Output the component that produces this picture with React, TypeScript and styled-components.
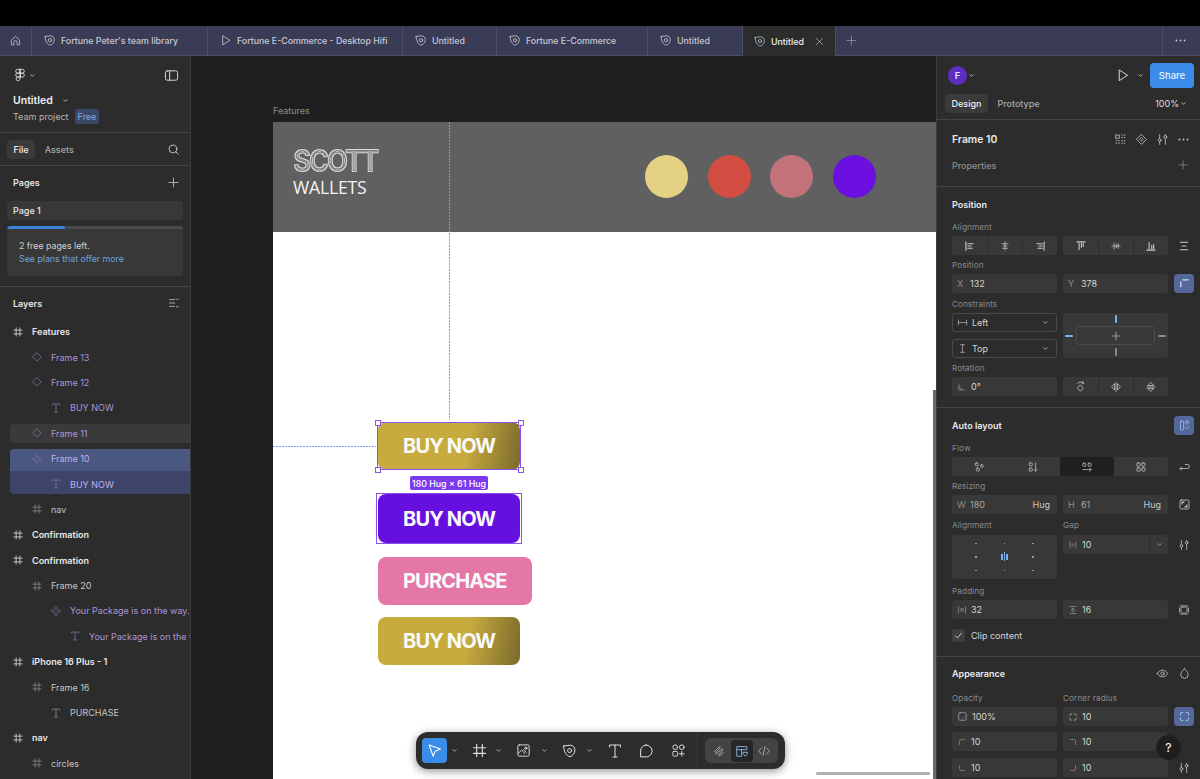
import React from "react";
import styled, { createGlobalStyle } from "styled-components";

const Global = createGlobalStyle`
  html, body { margin: 0; padding: 0; background: #000; }
  body { font-family: Inter, "Liberation Sans", sans-serif; overflow: hidden; }
  * { box-sizing: border-box; }
`;

const Shell = styled.div`
  width: 1200px; height: 779px; display: flex; flex-direction: column; overflow: hidden; background: #000;
`;
const TopBlack = styled.div`height: 26px; background: #000; flex: none;`;

/* ---------- icons ---------- */
const Svg = styled.svg<{ $c?: string }>`
  flex: none; display: block; fill: none; stroke: currentColor; stroke-width: 1;
  color: ${p => p.$c || "#c8c8c8"}; stroke-linecap: round; stroke-linejoin: round;
`;
const paths: Record<string, React.ReactNode> = {
  home: <path d="M3 7.5 8 3l5 4.5V13a.5.5 0 0 1-.5.5H10V10a2 2 0 0 0-4 0v3.5H3.5A.5.5 0 0 1 3 13Z" />,
  leaf: <><path d="M2.6 3 9.3 2.2c2.8 0 4.6 2.2 4.6 4.8 0 3.1-2.2 6-4.9 6.6C5.6 13.8 2.6 8 2.6 3Z" /><circle cx="8.6" cy="7.6" r="2" /></>,
  play: <path d="M4.5 2.5v11l8.5-5.5Z" />,
  x: <path d="M3.5 3.5l9 9M12.5 3.5l-9 9" />,
  plus: <path d="M8 2.5v11M2.5 8h11" />,
  chev: <path d="M5 6.5 8 9.5l3-3" strokeWidth="1.4" />,
  panel: <><rect x="1.5" y="3" width="13" height="10" rx="2" /><path d="M6 3v10" /></>,
  search: <><circle cx="7.3" cy="7.3" r="4.8" /><path d="m10.8 10.8 3 3" /></>,
  figma: <><path d="M8 1.5H5.3a2.2 2.2 0 0 0 0 4.4H8ZM8 1.5h2.7a2.2 2.2 0 0 1 0 4.4H8ZM8 5.9H5.3a2.2 2.2 0 0 0 0 4.4H8ZM8 8.1a2.2 2.2 0 1 1 4.9 0 2.2 2.2 0 0 1-4.9 0ZM8 10.3H5.3a2.2 2.2 0 1 0 2.7 2.2Z" /></>,
  collapse: <path d="M2 3.5h7M2 8h7M2 12.5h7M11 2.5l1.5 1.5L14 2.5M11 13.5l1.5-1.5 1.5 1.5" />,
  hash: <path d="M5.5 2.5v11M10.5 2.5v11M2.5 5.5h11M2.5 10.5h11" />,
  diamond: <path d="M8 2.5 13.5 8 8 13.5 2.5 8Z" />,
  instance: <path d="m8 1.8 2 2-2 2-2-2ZM8 10.2l2 2-2 2-2-2ZM3.8 6l2 2-2 2-2-2ZM12.2 6l2 2-2 2-2-2Z" />,
  text: <path d="M3 4V2.8h10V4M8 2.8v10.4M6 13.2h4" />,
  grid: <path d="M2.5 2.5h4v4h-4ZM9.5 2.5h1M12.5 2.5h1M9.5 5.5h1M12.5 5.5h1M2.5 9.5h1M5.5 9.5h1M9.5 9.5h1M12.5 9.5h1M2.5 12.5h1M5.5 12.5h1M9.5 12.5h1M12.5 12.5h1" />,
  comp: <><path d="M8 2 14 8 8 14 2 8Z" /><path d="M8 6 10 8 8 10 6 8Z" /></>,
  sliders: <><path d="M4.5 2v5M4.5 11v3M11.5 2v1M11.5 7v7" /><circle cx="4.5" cy="9" r="1.8" /><circle cx="11.5" cy="5" r="1.8" /></>,
  dots: <g fill="currentColor" stroke="none"><circle cx="3" cy="8" r="1.1" /><circle cx="8" cy="8" r="1.1" /><circle cx="13" cy="8" r="1.1" /></g>,
  alL: <path d="M2.5 2.5v11M5 5h7M5 8h4.5M5 11h6" strokeWidth="1.5" />,
  alC: <path d="M8 2.5v11M4 5h8M5.5 8h5M4.5 11h7" />,
  alR: <path d="M13.5 2.5v11M4 5h7M6.5 8H11M5 11h6" strokeWidth="1.5" />,
  alT: <path d="M2.5 2.5h11M5.5 4.5v8M8.5 4.5v5M11 4.5v4" strokeWidth="1.5" />,
  alM: <path d="M2.5 8h11M5.5 4v8M8.5 5.5v5M11 5v6" />,
  alB: <path d="M2.5 13.5h11M5.5 3.5v8M9 7v4.5M11.5 6v5.5" strokeWidth="1.5" />,
  dist: <path d="M3 3h10M3 13h10M5.5 8h5" strokeWidth="1.5" />,
  cnr: <path d="M3.5 12V6M6 3.5h6.5" strokeWidth="1.6" />,
  hLine: <path d="M2 4.5v7M14 4.5v7M2 8h12" />,
  vLine: <path d="M5 2.5h6M5 13.5h6M8 2.5v11" />,
  rot: <path d="M3 3.5v9h9M3 8.5a4 4 0 0 1 4 4" />,
  rot90: <><path d="M4.5 4A5 5 0 0 1 12 4M10.5 2 12 4l-2 .8" /><path d="m8 6.5 3.5 3.5L8 13.8 4.5 10Z" /></>,
  flipH: <path d="M8 2v12M6 4v8L2.5 8ZM10 4v8l3.5-4Z" />,
  flipV: <path d="M2.5 8h11M4 6h8L8 2.5ZM4 10h8l-4 3.5Z" />,
  auto: <><rect x="3" y="2.5" width="4" height="11" rx="1" /><rect x="9.5" y="2.5" width="3.5" height="3.5" rx="1" /><path d="m9.5 10.5 1.5 1.5 2.5-3" /></>,
  flowFree: <><rect x="3" y="2.5" width="4" height="4" rx="1.5" /><rect x="10" y="5" width="3.5" height="3.5" rx="1.5" /><rect x="4.5" y="9.5" width="4" height="4" rx="1.5" /></>,
  flowV: <><rect x="3" y="2.5" width="4" height="4" rx="1" /><rect x="3" y="9.5" width="4" height="4" rx="1" /><path d="M11.5 2.5v11M9.5 11.5l2 2 2-2" /></>,
  flowH: <><rect x="2.5" y="3" width="4" height="4" rx="1" /><rect x="9.5" y="3" width="4" height="4" rx="1" /><path d="M2.5 11.5h11M11.5 9.5l2 2-2 2" /></>,
  flowG: <><rect x="2.5" y="2.5" width="4.5" height="4.5" rx="1.5" /><rect x="9" y="2.5" width="4.5" height="4.5" rx="1.5" /><rect x="2.5" y="9" width="4.5" height="4.5" rx="1.5" /><rect x="9" y="9" width="4.5" height="4.5" rx="1.5" /></>,
  wrap: <path d="M2.5 10.5h9a2.5 2.5 0 0 0 0-5H9M4.5 8.5l-2 2 2 2" />,
  resize: <><rect x="2.5" y="2.5" width="11" height="11" rx="1.5" /><path d="M5 5h2.5M11 11H8.5M5 5v2.5M11 11V8.5" strokeWidth="1.4" /></>,
  gap: <path d="M3 3v10M13 3v10M6.5 6v4M9.5 6v4" />,
  padH: <><path d="M2.5 3v10M13.5 3v10" /><rect x="6" y="6" width="4" height="4" rx="1" /></>,
  padV: <><path d="M3 2.5h10M3 13.5h10" /><rect x="6" y="6" width="4" height="4" rx="1" /></>,
  padAll: <><rect x="4" y="4" width="8" height="8" rx="2" /><path d="M3 2.5h10M3 13.5h10M2 5v6M14 5v6" /></>,
  check: <path d="m3.5 8.5 3 3 6-7" strokeWidth="1.2" />,
  eye: <><path d="M1.5 8S4 3.8 8 3.8 14.5 8 14.5 8 12 12.2 8 12.2 1.5 8 1.5 8Z" /><circle cx="8" cy="8" r="2" /></>,
  drop: <path d="M8 2s4.5 4.2 4.5 7.5a4.5 4.5 0 0 1-9 0C3.5 6.2 8 2 8 2Z" />,
  opacity: <><rect x="2.5" y="2.5" width="11" height="11" rx="2" /><path d="M5 13 13 5" strokeOpacity=".35" /><path d="M8 13l5-5" strokeOpacity=".35" /></>,
  corners: <path d="M3 6V5a2 2 0 0 1 2-2h1M10 3h1a2 2 0 0 1 2 2v1M13 10v1a2 2 0 0 1-2 2h-1M6 13H5a2 2 0 0 1-2-2v-1" strokeWidth="1.3" />,
  cTL: <path d="M4 12V7a3 3 0 0 1 3-3h5" />,
  cTR: <path d="M4 4h5a3 3 0 0 1 3 3v5" />,
  cBL: <path d="M4 4v5a3 3 0 0 0 3 3h5" />,
  cBR: <path d="M4 12h5a3 3 0 0 0 3-3V4" />,
  move: <path d="m3 2.8 10.5 3.8-4.8 2-2 4.8Z" />,
  frame: <path d="M5 1.5v13M11 1.5v13M1.5 5h13M1.5 11h13" strokeWidth="1.2" />,
  image: <><rect x="2" y="2" width="12" height="12" rx="1.5" /><circle cx="10.5" cy="5.5" r="1.2" /><path d="m2.5 11 3.5-3.5 3.5 4M8 7l3 3" /></>,
  tee: <path d="M2.5 4V2h11v2M8 2v12M6 14h4" />,
  bubble: <path d="M8 2a6 6 0 1 1-1 11.9H2.6V8A5.9 5.9 0 0 1 8 2Z" />,
  widgets: <><circle cx="4.5" cy="4.5" r="2.5" /><circle cx="11.5" cy="4.5" r="2.5" /><rect x="2" y="9" width="5" height="5" rx="1" /><path d="M11.5 9v5M9 11.5h5" /></>,
  draw: <path d="M2.5 9 8 3.5c1-1 2 0 1 1L4.5 10c-1 1 0 2 1 1L11 6c1-1 2 0 1 1L8 12c-1 1 0 2 1 1l4-3" />,
  design: <><path d="M2.5 3h11v3.5h-6V14h-5ZM2.5 6.5h5" /><path d="m9.5 9.5h4.5v2L11.7 14l-2.2-2.5Z" /></>,
  code: <path d="M5 4.5 2 8l3 3.5M11 4.5 14 8l-3 3.5M9 3 7 13" />,
};
const Ic = ({ n, s = 14, c }: { n: string; s?: number; c?: string }) => (
  <Svg width={s} height={s} viewBox="0 0 16 16" $c={c}>{paths[n]}</Svg>
);

/* ---------- tabs ---------- */
const TabBar = styled.div`
  height: 30px; flex: none; display: flex; align-items: stretch; background: #3a3c56;
  border-bottom: 1px solid #4c4e66;
`;
const Tab = styled.div<{ $w: number; $active?: boolean }>`
  width: ${p => p.$w}px; display: flex; align-items: center; gap: 5px; padding-left: ${p => p.$active ? 10 : 11}px;
  border-right: 1px solid #4c4e66; font-size: 8.8px; font-weight: 500; white-space: nowrap;
  color: ${p => p.$active ? "#f0f0f0" : "#c6c8d4"};
  background: ${p => p.$active ? "#2c2c2c" : "transparent"};
  margin-bottom: ${p => p.$active ? "-1px" : "0"};
`;
const HomeTab = styled.div`
  width: 32px; display: flex; align-items: center; justify-content: center; border-right: 1px solid #4c4e66;
`;
const TabClose = styled.span`margin-left: 5px; display: flex;`;
const TabPlus = styled.div`margin-left: 9px; display: flex; align-items: center;`;
const TabMenu = styled.div`margin-left: auto; width: 38px; display: flex; align-items: center; border-left: 1px solid #4c4e66; padding-left: 11px;`;

/* ---------- main ---------- */
const Main = styled.div`flex: 1; display: flex; min-height: 0;`;
const Left = styled.aside`
  width: 191px; flex: none; background: #2c2c2c; border-right: 1px solid #3d3d3d; display: flex; flex-direction: column; overflow: hidden;
`;
const LeftHead = styled.div`height: 77px; flex: none; padding: 11px 12px 0 13px; border-bottom: 1px solid #444;`;
const LogoRow = styled.div`display: flex; align-items: center; height: 16px; gap: 1px; margin-bottom: 10px;`;
const PanelBtn = styled.div`margin-left: auto; margin-right: -1px;`;
const FileName = styled.div`display: flex; align-items: center; gap: 8px; font-size: 10.5px; font-weight: 600; color: #eee; height: 14px;`;
const TeamRow = styled.div`display: flex; align-items: center; gap: 6px; margin-top: 2px; font-size: 9px; color: #b4b4b4;`;
const Badge = styled.span`background: #3a4a66; color: #7ea6e0; padding: 2px 3px; border-radius: 3px; font-size: 9px;`;
const FileTabs = styled.div`height: 33px; flex: none; display: flex; align-items: center; gap: 3px; padding: 0 10px 0 7px; border-bottom: 1px solid #444;`;
const PillTab = styled.div`
  height: 19px; padding: 0 6.5px; display: flex; align-items: center; border-radius: 4px;
  font-size: 9px; font-weight: 500; color: #a8a8a8;
`;
const PillTabOn = styled(PillTab)`color: #eee; background: #3a3a3a;`;
const Spacer = styled.div`margin-left: auto;`;
const PagesSec = styled.div`height: 121px; flex: none; padding: 0 7px; border-bottom: 1px solid #444;`;
const SecHead = styled.div`height: 35px; display: flex; align-items: center; padding: 0 3px 2px 6px; font-size: 9px; font-weight: 600; color: #e6e6e6;`;
const PageRow = styled.div`height: 19px; background: #383838; border-radius: 4px; padding-left: 6px; display: flex; align-items: center; font-size: 9px; font-weight: 500; color: #ececec;`;
const Upsell = styled.div`margin-top: 6px; height: 50px; background: #383838; border-radius: 4px; overflow: hidden; font-size: 8.8px; line-height: 12.8px; color: #d0d0d0;`;
const Meter = styled.div`height: 3px; background: #4a4a4a; margin-bottom: 11px;`;
const MeterFill = styled.div`height: 100%; background: #3b82d8; border-radius: 2px;`;
const UpsellText = styled.div`padding-left: 12px;`;
const UpsellLink = styled.div`color: #6fa3d8;`;
const LayersHead = styled(SecHead)`padding: 0 10px 0 13px; height: 32px; flex: none;`;
const LayerList = styled.div`flex: 1;`;
const Row = styled.div<{ $d: number; $st?: string; $top?: boolean; $inst?: boolean }>`
  position: relative; height: 25.4px; display: flex; align-items: center; gap: 8px;
  padding-left: ${p => 12 + p.$d * 19}px; font-size: 9px; white-space: nowrap; overflow: hidden;
  font-weight: ${p => p.$top ? 600 : 400};
  color: ${p => p.$top ? "#e8e8e8" : p.$inst ? "#ab95d6" : "#c4c4c4"};
  &::before {
    content: ""; position: absolute; left: 10px; right: 0; display: ${p => p.$st ? "block" : "none"};
    top: ${p => p.$st === "child" ? 0 : 3}px; bottom: ${p => p.$st === "sel" ? 0 : 3}px;
    background: ${p => p.$st === "hover" ? "#3a3a3a" : p.$st === "sel" ? "#4a5780" : "#3e4568"};
    border-radius: ${p => p.$st === "sel" ? "4px 0 0 0" : p.$st === "child" ? "0 0 0 4px" : "4px 0 0 4px"};
  }
  & > * { position: relative; }
`;
const RowLabel = styled.span<{ $sel?: boolean }>`color: ${p => p.$sel ? "#bfb0ee" : "inherit"};`;

/* ---------- canvas ---------- */
const Canvas = styled.div`flex: 1; min-width: 0; position: relative; background: #1e1e1e; overflow: hidden; padding: 49px 0 0 82px;`;
const FrameName = styled.div`height: 17px; font-size: 9px; color: #8c8c8c; line-height: 12px;`;
const Frame = styled.div`width: 663px; background: #fff; height: 660px; position: relative;`;
const Nav = styled.div`height: 110px; background: #606060; display: flex; align-items: center; padding-left: 20px;`;
const Brand = styled.div`width: 92px; display: flex; flex-direction: column; margin-top: -8px;`;
const LogoSvg = styled.svg`display: block; margin-top: -8px;`;
const Wallets = styled.div`font-family: "Open Sans", sans-serif; font-size: 17.6px; line-height: 22px; color: #f4f4f4; letter-spacing: -.2px;`;
const Circles = styled.div`display: flex; gap: 19.5px; margin-left: 260px; margin-top: -1px;`;
const Dot = styled.div<{ $c: string }>`width: 43px; height: 43px; border-radius: 50%; background: ${p => p.$c};`;
const Buttons = styled.div`display: flex; flex-direction: column; align-items: flex-start; padding: 190px 0 0 105px;`;
const Btn = styled.div<{ $bg: string; $mt: number; $h?: number }>`
  height: ${p => p.$h || 48}px; margin-top: ${p => p.$mt}px; padding: 0 25px; border-radius: 8px; background: ${p => p.$bg};
  display: flex; align-items: center; color: #fafafa; font-size: 20px; font-weight: 700; letter-spacing: -.85px; position: relative;
`;
const gold = "linear-gradient(100deg, #c7ab3f 0%, #c7ab3f 62%, #7a6a2c 100%)";
const SelBox = styled.div<{ $t: number; $h: number; $l: number; $w: number }>`
  position: absolute; top: ${p => p.$t}px; left: ${p => p.$l}px; width: ${p => p.$w}px; height: ${p => p.$h}px;
  border: 1px solid #8a52ec;
`;
const Handle = styled.div<{ $x: string; $y: string }>`
  position: absolute; width: 6px; height: 6px; background: #fff; border: 1px solid #8a52ec;
  ${p => p.$x}: -3.5px; ${p => p.$y}: -3.5px;
`;
const SizeTag = styled.div`
  position: absolute; left: 137px; top: 354px; height: 14px; width: 78px; background: #7c3aed; color: #fff; border-radius: 2px;
  font-size: 8.8px; font-weight: 500; display: flex; align-items: center; justify-content: center; white-space: nowrap;
`;
const GuideV = styled.div`
  position: absolute; left: 176px; top: 0; height: 298px; width: 1px;
  background: repeating-linear-gradient(180deg, #6aa0ee 0 2px, transparent 2px 3px);
`;
const GuideH = styled.div`
  position: absolute; left: 0; top: 324px; width: 103px; height: 1px;
  background: repeating-linear-gradient(90deg, #6aa0ee 0 2px, transparent 2px 3px);
`;
const ScrollH = styled.div`position: absolute; left: 625px; top: 716px; width: 114px; height: 3px; border-radius: 2px; background: #b0b0b0;`;
const ScrollV = styled.div`position: absolute; right: 0; top: 334px; bottom: 0; width: 3px; background: #6a6a6a;`;

const Toolbar = styled.div`
  position: absolute; left: 225px; top: 676px; width: 369px; height: 37px; border-radius: 12px; background: #2c2c2c;
  box-shadow: 0 2px 8px rgba(0,0,0,.45); display: flex; align-items: center; padding-left: 6px;
`;
const MoveBtn = styled.div`width: 25px; height: 25px; background: #3b8be8; border-radius: 4px; display: flex; align-items: center; justify-content: center; color: #fff;`;
const Tool = styled.div<{ $ml: number }>`margin-left: ${p => p.$ml}px; display: flex; align-items: center;`;
const ModeWrap = styled.div`margin-left: auto; height: 37px; border-left: 1px solid #3a3a3a; padding: 0 7px; display: flex; align-items: center;`;
const Modes = styled.div`height: 25px; width: 73px; background: #434343; border-radius: 6px; display: flex; align-items: center; justify-content: space-between; padding: 0 3px;`;
const Mode = styled.div<{ $on?: boolean }>`width: 22px; height: 22px; border-radius: 4px; display: flex; align-items: center; justify-content: center; background: ${p => p.$on ? "#262626" : "transparent"};`;

/* ---------- right ---------- */
const Right = styled.aside`width: 264px; flex: none; background: #2c2c2c; border-left: 1px solid #3d3d3d; overflow: hidden; position: relative;`;
const RHead = styled.div`height: 64px; border-bottom: 1px solid #444; padding: 0 6px 0 8px;`;
const RTop = styled.div`height: 38px; display: flex; align-items: center;`;
const Avatar = styled.div`width: 19px; height: 19px; border-radius: 50%; background: #5a2fc2; color: #e8e0ff; font-size: 9.5px; font-weight: 600; display: flex; align-items: center; justify-content: center; margin-left: 3px;`;
const ShareBtn = styled.div`width: 44px; height: 25px; border-radius: 4px; background: #3b8be8; color: #e8f2ff; font-size: 9.5px; font-weight: 500; display: flex; align-items: center; justify-content: center;`;
const PlayGroup = styled.div`margin-left: auto; display: flex; align-items: center; margin-right: 5px; gap: 6px;`;
const RTabs = styled.div`height: 19px; display: flex; align-items: center; gap: 3px;`;
const Zoom = styled.div`margin-left: auto; margin-right: 6px; display: flex; align-items: center; font-size: 9px; color: #ddd;`;
const Sec = styled.section<{ $h: number; $pt?: number }>`height: ${p => p.$h}px; border-bottom: 1px solid #444; padding: ${p => p.$pt ?? 10}px 6px 0 15px;`;
const LastSec = styled(Sec)`border-bottom: none;`;
const TitleRow = styled.div`height: 14px; display: flex; align-items: center; font-size: 9px; font-weight: 600; color: #eaeaea;`;
const FrameTitle = styled(TitleRow)`font-size: 10.4px; font-weight: 600; height: 19px;`;
const TitleIcons = styled.div<{ $g?: number; $mr?: number }>`margin-left: auto; display: flex; align-items: center; gap: ${p => p.$g || 9}px; margin-right: ${p => p.$mr || 0}px;`;
const PropRow = styled.div`height: 14px; margin-top: 9px; display: flex; align-items: center; justify-content: space-between; font-size: 9px; font-weight: 500; color: #8e8e8e; padding-right: 5px;`;
const Lbl = styled.div<{ $mt?: number; $mb?: number }>`height: 12px; margin: ${p => p.$mt ?? 4}px 0 ${p => p.$mb ?? 3}px; font-size: 8.2px; color: #8a8a8a; line-height: 12px; letter-spacing: .1px;`;
const G = styled.div`display: grid; grid-template-columns: 105px 105px 20px; column-gap: 6px;`;
const LblPair = styled(G)<{ $mt?: number }>`margin-top: ${p => p.$mt || 0}px;`;
const Field = styled.div`
  height: 19px; border-radius: 3px; background: #383838;
  padding: 0 5px; display: flex; align-items: center; gap: 4px; font-size: 9px; color: #d6d6d6; position: relative; align-self: start;
`;
const SelectField = styled(Field)`background: transparent; border: 1px solid #4a4a4a; padding: 0 4px; align-self: stretch;`;
const Axis = styled.span`color: #8c8c8c; width: 9px; text-align: left;`;
const Dim = styled.span`color: #a6a6a6;`;
const Right2 = styled.span`margin-left: auto; color: #c8c8c8; margin-right: 2px;`;
const Seg = styled.div`height: 19px; background: #383838; border-radius: 3px; display: grid; grid-auto-flow: column; grid-auto-columns: 1fr;`;
const WideSeg = styled(Seg)`grid-column: 1 / 3;`;
const SegCell = styled.div<{ $on?: boolean; $line?: boolean }>`
  display: flex; align-items: center; justify-content: center; border-radius: 3px;
  background: ${p => p.$on ? "#1f1f1f" : "transparent"};
  border-left: ${p => p.$line ? "1px solid #2e2e2e" : "none"};
`;
const IconSlot = styled.div<{ $on?: boolean }>`
  width: 20px; height: 19px; border-radius: 4px; display: flex; align-items: center; justify-content: center;
  background: ${p => p.$on ? "#55689a" : "transparent"};
`;
const ConstraintCol = styled.div`display: flex; flex-direction: column; gap: 7px;`;
const ConstraintBox = styled.div`height: 45px; background: #383838; border-radius: 3px; position: relative;`;
const CInner = styled.div`position: absolute; left: 13px; right: 13px; top: 13px; height: 19px; border: 1px solid #4a4a4a; border-radius: 3px; display: flex; align-items: center; justify-content: center;`;
const CTick = styled.div<{ $on?: boolean; $v?: boolean; $pos: string }>`
  position: absolute; ${p => p.$pos}; width: ${p => p.$v ? 2 : 8}px; height: ${p => p.$v ? 8 : 2}px; border-radius: 1px;
  background: ${p => p.$on ? "#7fb0e8" : "#8a8a8a"};
`;
const AlignBox = styled.div`height: 44px; background: #383838; border-radius: 3px; display: grid; grid-template-columns: repeat(3, 1fr); grid-template-rows: repeat(3, 1fr); padding: 2px 10px; justify-items: center; align-items: center;`;
const Pip = styled.i`width: 1.5px; height: 1.5px; background: #9a9a9a; display: block;`;
const Bars = styled.div`display: flex; gap: 1px; align-items: center;`;
const Bar = styled.i<{ $h: number }>`display: block; width: 1.5px; height: ${p => p.$h}px; background: #7fb0e8;`;
const GapStepper = styled.span`margin-left: auto; height: 19px; border-left: 1px solid #2e2e2e; padding-left: 5px; display: flex; align-items: center; margin-right: -1px;`;
const ClipRow = styled.div`display: flex; align-items: center; gap: 6px; height: 14px; margin-top: 9px; font-size: 9px; color: #d6d6d6;`;
const Check = styled.div`width: 13px; height: 13px; border-radius: 3px; background: #3f3f3f; display: flex; align-items: center; justify-content: center;`;
const RowGap = styled(G)<{ $mt: number }>`margin-top: ${p => p.$mt}px;`;
const Help = styled.div`position: absolute; left: 219px; top: 679px; width: 25px; height: 25px; border-radius: 50%; background: #1e1e1e; color: #eee; font-size: 12px; font-weight: 500; display: flex; align-items: center; justify-content: center;`;
const AutoToggle = styled(IconSlot)`margin-top: 1px;`;

const layers: { t: string; d: number; k: string; top?: boolean; inst?: boolean; st?: string }[] = [
  { t: "Features", d: 0, k: "hash", top: true },
  { t: "Frame 13", d: 1, k: "diamond", inst: true },
  { t: "Frame 12", d: 1, k: "diamond", inst: true },
  { t: "BUY NOW", d: 2, k: "text", inst: true },
  { t: "Frame 11", d: 1, k: "diamond", inst: true, st: "hover" },
  { t: "Frame 10", d: 1, k: "instance", inst: true, st: "sel" },
  { t: "BUY NOW", d: 2, k: "text", inst: true, st: "child" },
  { t: "nav", d: 1, k: "hash" },
  { t: "Confirmation", d: 0, k: "hash", top: true },
  { t: "Confirmation", d: 0, k: "hash", top: true },
  { t: "Frame 20", d: 1, k: "hash" },
  { t: "Your Package is on the way.", d: 2, k: "instance", inst: true },
  { t: "Your Package is on the way.", d: 3, k: "text", inst: true },
  { t: "iPhone 16 Plus - 1", d: 0, k: "hash", top: true },
  { t: "Frame 16", d: 1, k: "hash" },
  { t: "PURCHASE", d: 2, k: "text" },
  { t: "nav", d: 0, k: "hash", top: true },
  { t: "circles", d: 1, k: "hash" },
];

const ScottLogo = () => (
  <LogoSvg width="92" height="36" viewBox="0 0 92 36">
    <defs>
      <filter id="scottRings" x="-5%" y="-10%" width="110%" height="120%" colorInterpolationFilters="sRGB">
        <feMorphology in="SourceGraphic" operator="erode" radius="1" result="e1" />
        <feMorphology in="SourceGraphic" operator="erode" radius="2" result="e2" />
        <feFlood floodColor="#7c7c7c" result="dark" />
        <feComposite in="dark" in2="e1" operator="in" result="gap" />
        <feMerge>
          <feMergeNode in="SourceGraphic" />
          <feMergeNode in="gap" />
          <feMergeNode in="e2" />
        </feMerge>
      </filter>
    </defs>
    <text x="0" y="32" fontFamily="Inter, sans-serif" fontWeight="800" fontSize="31" letterSpacing="-3"
      fill="#d8d8d8" textLength="84" lengthAdjust="spacingAndGlyphs" filter="url(#scottRings)">SCOTT</text>
  </LogoSvg>
);

export default function App() {
  return (
    <Shell>
      <Global />
      <TopBlack />
      <TabBar>
        <HomeTab><Ic n="home" s={13} c="#c6c8d4" /></HomeTab>
        <Tab $w={176}><Ic n="leaf" s={13} c="#c6c8d4" />Fortune Peter's team library</Tab>
        <Tab $w={195}><Ic n="play" s={13} c="#c6c8d4" />Fortune E-Commerce - Desktop Hifi</Tab>
        <Tab $w={94}><Ic n="leaf" s={13} c="#c6c8d4" />Untitled</Tab>
        <Tab $w={151}><Ic n="leaf" s={13} c="#c6c8d4" />Fortune E-Commerce</Tab>
        <Tab $w={95}><Ic n="leaf" s={13} c="#c6c8d4" />Untitled</Tab>
        <Tab $w={93} $active><Ic n="leaf" s={13} c="#a9c4d8" />Untitled<TabClose><Ic n="x" s={11} c="#c0c0c0" /></TabClose></Tab>
        <TabPlus><Ic n="plus" s={13} c="#8d90a8" /></TabPlus>
        <TabMenu><Ic n="dots" s={13} c="#c6c8d4" /></TabMenu>
      </TabBar>
      <Main>
        <Left>
          <LeftHead>
            <LogoRow>
              <Ic n="figma" s={14} c="#e0e0e0" />
              <Ic n="chev" s={9} c="#ccc" />
              <PanelBtn><Ic n="panel" s={15} c="#e0e0e0" /></PanelBtn>
            </LogoRow>
            <FileName>Untitled <Ic n="chev" s={9} c="#ccc" /></FileName>
            <TeamRow>Team project <Badge>Free</Badge></TeamRow>
          </LeftHead>
          <FileTabs>
            <PillTabOn>File</PillTabOn><PillTab>Assets</PillTab>
            <Spacer><Ic n="search" s={13} c="#ddd" /></Spacer>
          </FileTabs>
          <PagesSec>
            <SecHead>Pages<Spacer><Ic n="plus" s={13} c="#c8c8c8" /></Spacer></SecHead>
            <PageRow>Page 1</PageRow>
            <Upsell>
              <Meter><MeterFill style={{ width: "33%" }} /></Meter>
              <UpsellText>2 free pages left.<UpsellLink>See plans that offer more</UpsellLink></UpsellText>
            </Upsell>
          </PagesSec>
          <LayersHead>Layers<Spacer><Ic n="collapse" s={12} c="#c8c8c8" /></Spacer></LayersHead>
          <LayerList>
            {layers.map((l, i) => (
              <Row key={i} $d={l.d} $st={l.st} $top={l.top} $inst={l.inst}>
                <Ic n={l.k} s={12} c={l.top ? "#e8e8e8" : l.inst ? "#8573ad" : "#8c8c8c"} />
                <RowLabel $sel={l.st === "sel" || l.st === "child"}>{l.t}</RowLabel>
              </Row>
            ))}
          </LayerList>
        </Left>

        <Canvas>
          <FrameName>Features</FrameName>
          <Frame>
            <Nav>
              <Brand>
                <ScottLogo />
                <Wallets>WALLETS</Wallets>
              </Brand>
              <Circles>
                <Dot $c="#e5d184" /><Dot $c="#d44d42" /><Dot $c="#c2737a" /><Dot $c="#6b10e0" />
              </Circles>
            </Nav>
            <Buttons>
              <Btn $bg={gold} $mt={0}>BUY NOW</Btn>
              <Btn $bg="#6610e0" $mt={24} $h={49}>BUY NOW</Btn>
              <Btn $bg="#e577a6" $mt={14}>PURCHASE</Btn>
              <Btn $bg={gold} $mt={12}>BUY NOW</Btn>
            </Buttons>
            <GuideV />
            <GuideH />
            <SelBox $l={104} $t={300} $w={144} $h={48}>
              <Handle $x="left" $y="top" /><Handle $x="right" $y="top" /><Handle $x="left" $y="bottom" /><Handle $x="right" $y="bottom" />
            </SelBox>
            <SelBox $l={103} $t={371} $w={146} $h={51} />
            <SizeTag>180 Hug × 61 Hug</SizeTag>
          </Frame>
          <ScrollH />
          <ScrollV />
          <Toolbar>
            <MoveBtn><Ic n="move" s={17} c="#fff" /></MoveBtn>
            <Tool $ml={3}><Ic n="chev" s={9} /></Tool>
            <Tool $ml={13}><Ic n="frame" s={15} c="#e0e0e0" /></Tool>
            <Tool $ml={7}><Ic n="chev" s={9} /></Tool>
            <Tool $ml={13}><Ic n="image" s={15} c="#e0e0e0" /></Tool>
            <Tool $ml={9}><Ic n="chev" s={9} /></Tool>
            <Tool $ml={12}><Ic n="leaf" s={16} c="#e0e0e0" /></Tool>
            <Tool $ml={8}><Ic n="chev" s={9} /></Tool>
            <Tool $ml={13}><Ic n="tee" s={16} c="#e0e0e0" /></Tool>
            <Tool $ml={15}><Ic n="bubble" s={16} c="#e0e0e0" /></Tool>
            <Tool $ml={17}><Ic n="widgets" s={15} c="#e0e0e0" /></Tool>
            <ModeWrap>
              <Modes>
                <Mode><Ic n="draw" s={14} c="#b0b0b0" /></Mode>
                <Mode $on><Ic n="design" s={14} c="#8fc0ee" /></Mode>
                <Mode><Ic n="code" s={14} c="#b0b0b0" /></Mode>
              </Modes>
            </ModeWrap>
          </Toolbar>
        </Canvas>

        <Right>
          <RHead>
            <RTop>
              <Avatar>F</Avatar>
              <Ic n="chev" s={9} c="#ccc" />
              <PlayGroup><Ic n="play" s={15} c="#e4e4e4" /><Ic n="chev" s={9} c="#ccc" /></PlayGroup>
              <ShareBtn>Share</ShareBtn>
            </RTop>
            <RTabs>
              <PillTabOn>Design</PillTabOn><PillTab>Prototype</PillTab>
              <Zoom>100% <Ic n="chev" s={9} c="#ccc" /></Zoom>
            </RTabs>
          </RHead>

          <Sec $h={67}>
            <FrameTitle>Frame 10
              <TitleIcons $g={8} $mr={4}>
                <Ic n="grid" s={13} /><Ic n="comp" s={13} /><Ic n="sliders" s={13} /><Ic n="dots" s={13} />
              </TitleIcons>
            </FrameTitle>
            <PropRow>Properties<Ic n="plus" s={12} c="#8e8e8e" /></PropRow>
          </Sec>

          <Sec $h={221}>
            <TitleRow>Position</TitleRow>
            <Lbl $mt={10}>Alignment</Lbl>
            <G>
              <Seg>
                <SegCell><Ic n="alL" s={12} /></SegCell><SegCell $line><Ic n="alC" s={12} /></SegCell><SegCell $line><Ic n="alR" s={12} /></SegCell>
              </Seg>
              <Seg>
                <SegCell><Ic n="alT" s={12} /></SegCell><SegCell $line><Ic n="alM" s={12} /></SegCell><SegCell $line><Ic n="alB" s={12} /></SegCell>
              </Seg>
              <IconSlot><Ic n="dist" s={12} /></IconSlot>
            </G>
            <Lbl>Position</Lbl>
            <G>
              <Field><Axis>X</Axis>132</Field>
              <Field><Axis>Y</Axis>378</Field>
              <IconSlot $on><Ic n="cnr" s={13} c="#cfe0f5" /></IconSlot>
            </G>
            <Lbl $mt={5}>Constraints</Lbl>
            <G>
              <ConstraintCol>
                <SelectField><Ic n="hLine" s={11} c="#bbb" />Left<Right2><Ic n="chev" s={9} /></Right2></SelectField>
                <SelectField><Ic n="vLine" s={11} c="#bbb" />Top<Right2><Ic n="chev" s={9} /></Right2></SelectField>
              </ConstraintCol>
              <ConstraintBox>
                <CInner><Ic n="plus" s={12} c="#b4b4b4" /></CInner>
                <CTick $on $v $pos="left: 51.5px; top: 2px" />
                <CTick $v $pos="left: 51.5px; bottom: 2px" />
                <CTick $on $pos="left: 2px; top: 21.5px" />
                <CTick $pos="right: 2px; top: 21.5px" />
              </ConstraintBox>
            </G>
            <Lbl>Rotation</Lbl>
            <G>
              <Field><Ic n="rot" s={10} c="#a0a0a0" />0°</Field>
              <Seg>
                <SegCell><Ic n="rot90" s={13} /></SegCell><SegCell $line><Ic n="flipH" s={12} /></SegCell><SegCell $line><Ic n="flipV" s={12} /></SegCell>
              </Seg>
            </G>
          </Sec>

          <Sec $h={249}>
            <TitleRow>Auto layout
              <TitleIcons><AutoToggle $on><Ic n="auto" s={13} c="#9cc0ee" /></AutoToggle></TitleIcons>
            </TitleRow>
            <Lbl $mt={10}>Flow</Lbl>
            <G>
              <WideSeg>
                <SegCell><Ic n="flowFree" s={12} /></SegCell><SegCell><Ic n="flowV" s={12} /></SegCell>
                <SegCell $on><Ic n="flowH" s={12} /></SegCell><SegCell><Ic n="flowG" s={12} /></SegCell>
              </WideSeg>
              <IconSlot><Ic n="wrap" s={13} /></IconSlot>
            </G>
            <Lbl>Resizing</Lbl>
            <G>
              <Field><Axis>W</Axis><Dim>180</Dim><Right2>Hug</Right2></Field>
              <Field><Axis>H</Axis><Dim>61</Dim><Right2>Hug</Right2></Field>
              <IconSlot><Ic n="resize" s={13} /></IconSlot>
            </G>
            <LblPair>
              <Lbl $mt={5} $mb={4}>Alignment</Lbl><Lbl $mt={5} $mb={4}>Gap</Lbl>
            </LblPair>
            <G>
              <AlignBox>
                <Pip /><Pip /><Pip />
                <Pip /><Bars><Bar $h={6} /><Bar $h={9} /><Bar $h={6} /></Bars><Pip />
                <Pip /><Pip /><Pip />
              </AlignBox>
              <Field><Ic n="gap" s={10} c="#9a9a9a" />10<GapStepper><Ic n="chev" s={9} c="#aaa" /></GapStepper></Field>
              <IconSlot><Ic n="sliders" s={12} /></IconSlot>
            </G>
            <Lbl $mt={6}>Padding</Lbl>
            <G>
              <Field><Ic n="padH" s={10} c="#aaa" />32</Field>
              <Field><Ic n="padV" s={10} c="#aaa" />16</Field>
              <IconSlot><Ic n="padAll" s={12} /></IconSlot>
            </G>
            <ClipRow><Check><Ic n="check" s={11} c="#e8e8e8" /></Check>Clip content</ClipRow>
          </Sec>

          <LastSec $h={140} $pt={9}>
            <TitleRow>Appearance
              <TitleIcons $g={9} $mr={3}><Ic n="eye" s={13} /><Ic n="drop" s={13} /></TitleIcons>
            </TitleRow>
            <LblPair $mt={8}>
              <Lbl>Opacity</Lbl><Lbl>Corner radius</Lbl>
            </LblPair>
            <G>
              <Field><Ic n="opacity" s={11} c="#aaa" />100%</Field>
              <Field><Ic n="corners" s={10} c="#aaa" />10</Field>
              <IconSlot $on><Ic n="corners" s={13} c="#9cc0ee" /></IconSlot>
            </G>
            <RowGap $mt={6}>
              <Field><Ic n="cTL" s={10} c="#9a9a9a" />10</Field>
              <Field><Ic n="cTR" s={10} c="#9a9a9a" />10</Field>
            </RowGap>
            <RowGap $mt={7}>
              <Field><Ic n="cBL" s={10} c="#9a9a9a" />10</Field>
              <Field><Ic n="cBR" s={10} c="#9a9a9a" />10</Field>
              <IconSlot><Ic n="sliders" s={12} /></IconSlot>
            </RowGap>
          </LastSec>
          <Help>?</Help>
        </Right>
      </Main>
    </Shell>
  );
}
